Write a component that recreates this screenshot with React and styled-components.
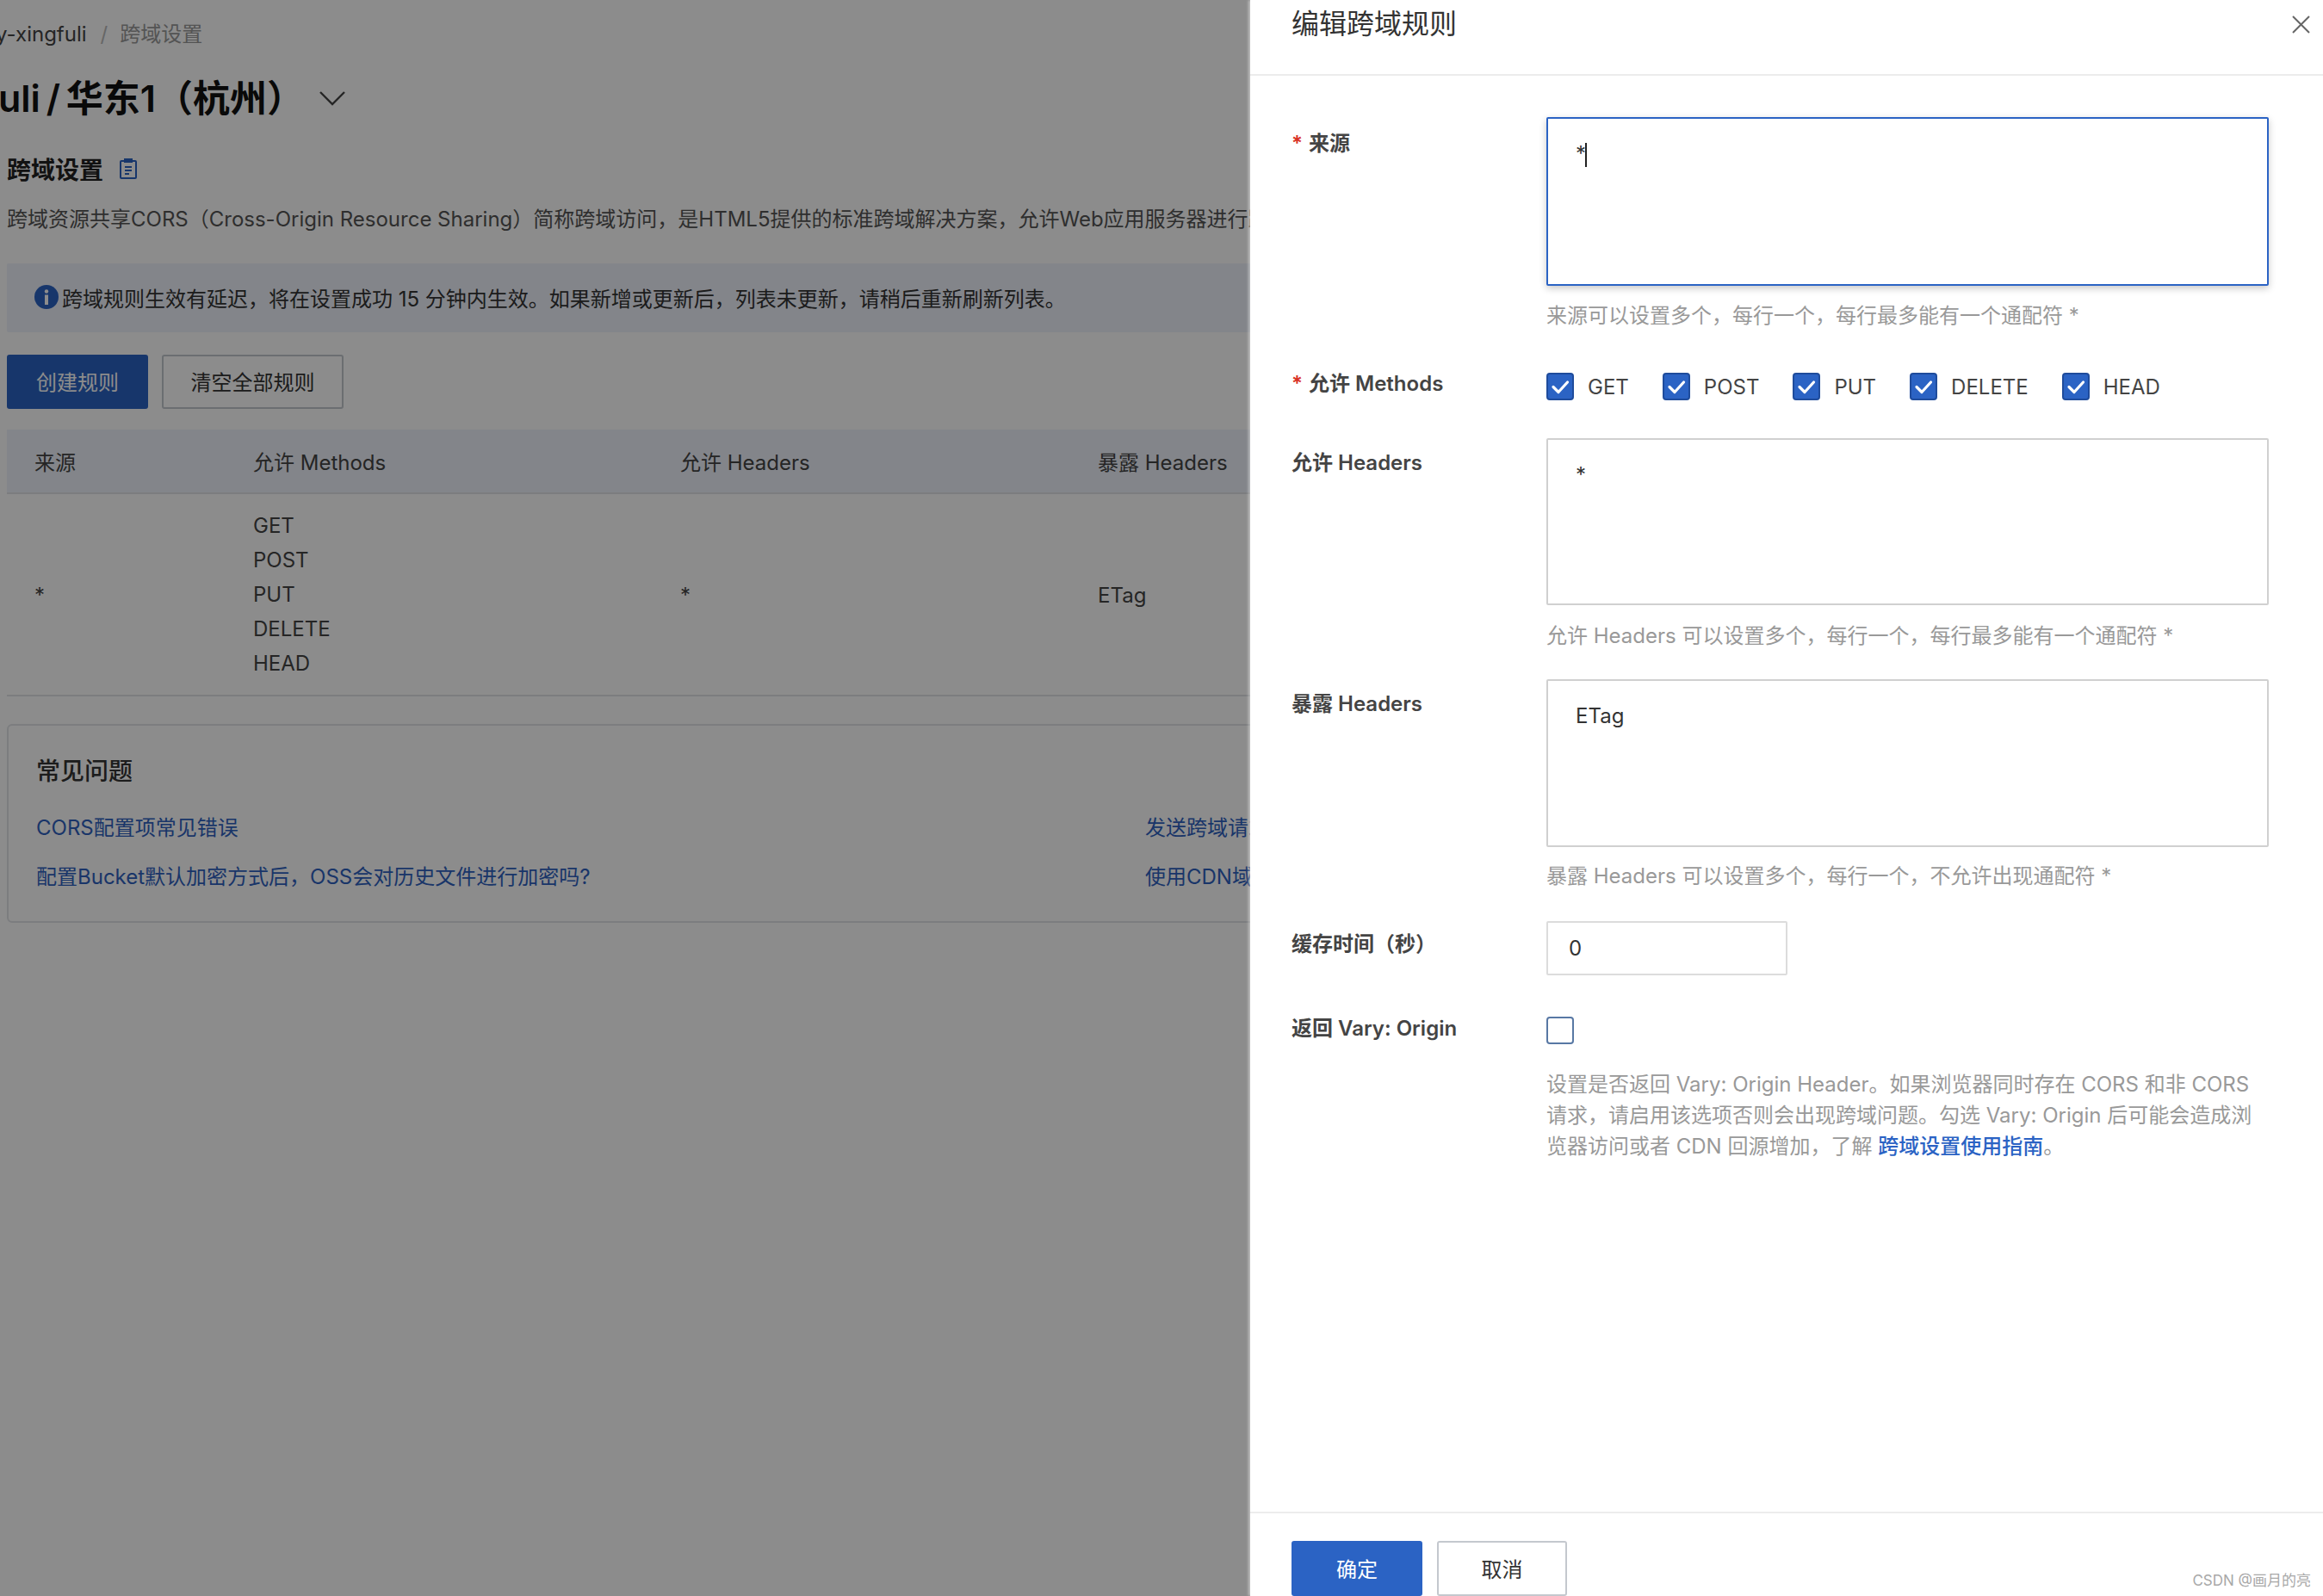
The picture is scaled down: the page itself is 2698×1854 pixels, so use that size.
import React from "react";
import styled, { createGlobalStyle } from "styled-components";

const FONT = `Inter, "Noto Sans CJK SC", "Liberation Sans", sans-serif`;

const Global = createGlobalStyle`
  html, body { margin: 0; padding: 0; background: #fff; overflow: hidden; }
  #root { height: 1854px; }
  * { box-sizing: border-box; }
  body { font-family: ${FONT}; font-size: 24px; color: #333; }
`;

const Screen = styled.div`
  position: relative;
  width: 2698px;
  height: 1854px;
  overflow: hidden;
`;

const Page = styled.main`
  padding: 20px 0 0 8px;
  width: 1480px;
  overflow: hidden;
`;

const Breadcrumb = styled.nav`
  display: flex;
  align-items: center;
  height: 40px;
  margin-left: -8px;
  line-height: 40px;
  white-space: nowrap;
  color: #444;
`;

const Crumb = styled.span`
  margin-left: ${(p) => p.$clip || 0}px;
  color: ${(p) => p.$muted ? "#999" : "#444"};
`;

const CrumbSlash = styled.span`
  margin: 0 14px 0 16px;
  color: #bbb;
`;

const PageTitleRow = styled.div`
  display: flex;
  align-items: center;
  height: 60px;
  margin: 24px 0 0 -8px;
`;

const PageTitle = styled.h1`
  margin: 0 0 0 -2px;
  font-size: 43px;
  font-weight: 600;
  line-height: 60px;
  word-spacing: -4px;
  color: #111;
  white-space: nowrap;
`;

const Chevron = styled.svg`
  margin-left: 17px;
  width: 32px;
  height: 18px;
  flex: none;
`;

const SectionHead = styled.div`
  display: flex;
  align-items: center;
  height: 40px;
  margin-top: 32px;
  gap: 19px;
`;

const SectionTitle = styled.h2`
  margin: 0;
  font-size: 28px;
  font-weight: 600;
  color: #222;
`;

const Intro = styled.p`
  margin: 21px 0 0;
  line-height: 36px;
  color: #555;
  white-space: nowrap;
`;

const Notice = styled.div`
  display: flex;
  align-items: center;
  gap: 4px;
  height: 80px;
  margin-top: 33px;
  padding: 0 0 2px 32px;
  background: #eef2fb;
  color: #333;
  white-space: nowrap;
  border-radius: 2px;
`;

const Actions = styled.div`
  display: flex;
  gap: 16px;
  margin-top: 26px;
`;

const Button = styled.button`
  width: ${(p) => p.$w}px;
  height: ${(p) => p.$h || 63}px;
  font: inherit;
  font-size: 24px;
  border-radius: 3px;
  padding: 0 0 2px;
  cursor: pointer;
  border: 2px solid ${(p) => (p.$primary ? "#2b63c4" : "#c4c8ce")};
  background: ${(p) => (p.$primary ? "#2b63c4" : "#fff")};
  color: ${(p) => (p.$primary ? "#fff" : "#333")};
`;

const Table = styled.div`
  margin-top: 24px;
  width: 2000px;
`;

const TableHead = styled.div`
  display: grid;
  grid-template-columns: 254px 496px 485px 1fr;
  align-items: center;
  height: 75px;
  padding-left: 32px;
  background: #eef2fb;
  border-bottom: 2px solid #e2e4e8;
  color: #444;
`;

const TableRow = styled.div`
  display: grid;
  grid-template-columns: 254px 496px 485px 1fr;
  align-items: center;
  padding: 17px 0 16px 32px;
  border-bottom: 2px solid #e2e4e8;
  color: #444;
`;

const MethodLine = styled.div`
  line-height: 40px;
`;

const FaqCard = styled.section`
  width: 2000px;
  height: 231px;
  margin-top: 32px;
  padding: 32px 0 0 32px;
  border: 2px solid #e2e4e8;
  border-radius: 6px;
`;

const FaqTitle = styled.h3`
  margin: 0;
  font-size: 28px;
  font-weight: 500;
  line-height: 42px;
  color: #333;
`;

const FaqGrid = styled.div`
  display: grid;
  grid-template-columns: 1288px 1fr;
  grid-auto-rows: 57px;
  align-items: center;
  margin-top: 14px;
`;

const FaqLink = styled.a`
  color: #2f62c0;
  white-space: nowrap;
`;

const Scrim = styled.div`
  position: absolute;
  inset: 0;
  background: rgba(0, 0, 0, 0.45);
`;

const Drawer = styled.aside`
  position: absolute;
  top: 0;
  right: 0;
  bottom: 0;
  width: 1246px;
  display: flex;
  flex-direction: column;
  background: #fff;
  box-shadow: -2px 0 3px rgba(255, 255, 255, 0.45);
`;

const DrawerHead = styled.header`
  display: flex;
  justify-content: space-between;
  height: 88px;
  padding: 0 15px 0 48px;
  border-bottom: 2px solid #ececec;
`;

const DrawerTitle = styled.h2`
  margin: 0;
  font-size: 32px;
  font-weight: 400;
  line-height: 56px;
  color: #333;
`;

const CloseIcon = styled.svg`
  margin-top: 18px;
  width: 21px;
  height: 21px;
`;

const DrawerBody = styled.div`
  flex: 1;
  padding: 48px 64px 0 48px;
`;

const FormRow = styled.div`
  display: grid;
  grid-template-columns: 296px 839px;
  margin-top: ${(p) => p.$mt || 0}px;
`;

const FieldLabel = styled.label`
  display: block;
  margin-top: ${(p) => p.$top || 0}px;
  line-height: 36px;
  font-weight: 600;
  color: #444;
`;

const Required = styled.span`
  color: #d93026;
  margin-right: 7px;
`;

const TextBox = styled.div`
  height: ${(p) => p.$h}px;
  padding: 23px 32px;
  line-height: 36px;
  border-radius: 2px;
  color: #333;
  border: 2px solid ${(p) => (p.$focus ? "#2b63c4" : "#d0d0d0")};
  box-shadow: ${(p) => (p.$focus ? "0 3px 8px rgba(0,0,0,.22)" : "none")};
`;

const Caret = styled.span`
  display: inline-block;
  width: 2px;
  height: 28px;
  margin-left: -1px;
  vertical-align: -7px;
  background: #222;
`;

const Hint = styled.div`
  margin-top: ${(p) => p.$mt}px;
  line-height: 36px;
  color: #999;
`;

const Methods = styled.div`
  display: flex;
  gap: 39px;
`;

const Method = styled.label`
  display: flex;
  align-items: center;
  gap: 16px;
  height: 32px;
  color: #444;
`;

const Check = styled.span`
  display: flex;
  align-items: center;
  justify-content: center;
  width: 32px;
  height: 32px;
  flex: none;
  border-radius: 4px;
  background: ${(p) => (p.$on ? "#2b63c4" : "#fff")};
  border: 2px solid ${(p) => (p.$on ? "#1f4c9c" : "#5878a4")};
`;

const NumberBox = styled.div`
  width: 280px;
  height: 63px;
  padding-left: 24px;
  line-height: 60px;
  border: 2px solid #dcdcdc;
  border-radius: 2px;
  color: #333;
`;

const HelpLine = styled.div`
  line-height: 36px;
  white-space: nowrap;
`;

const HelpLink = styled.a`
  color: #2b63c4;
  font-weight: 500;
`;

const DrawerFoot = styled.footer`
  display: flex;
  gap: 17px;
  height: 98px;
  padding: 32px 0 0 48px;
  border-top: 2px solid #ececec;
`;

const Watermark = styled.div`
  position: absolute;
  right: 14px;
  bottom: 6px;
  font-size: 17px;
  line-height: 24px;
  color: #a8a8a8;
`;

const METHODS = ["GET", "POST", "PUT", "DELETE", "HEAD"];

const Tick = () => (
  <svg width="28" height="28" viewBox="0 0 28 28" fill="none" stroke="#fff" strokeWidth="3.2" strokeLinecap="round" strokeLinejoin="round">
    <path d="M6 14.5l6 6L22.500 9" />
  </svg>
);

const DocIcon = () => (
  <svg width="20" height="24" viewBox="0 0 20 24" fill="none" stroke="#2b63c4" strokeWidth="2">
    <rect x="1" y="3" width="18" height="20" rx="1" />
    <path d="M6 1h8v3H6zM6 10h8M6 14h8M6 18h5" />
  </svg>
);

const InfoIcon = () => (
  <svg width="28" height="28" viewBox="0 0 28 28">
    <circle cx="14" cy="14" r="14" fill="#2b63c4" />
    <circle cx="14" cy="7.5" r="2.2" fill="#fff" />
    <rect x="12" y="11.5" width="4" height="11.5" fill="#fff" />
  </svg>
);

export default function App() {
  return (
    <Screen>
      <Global />
      <Page>
        <Breadcrumb>
          <Crumb $clip={-5}>y-xingfuli</Crumb>
          <CrumbSlash>/</CrumbSlash>
          <Crumb $muted>跨域设置</Crumb>
        </Breadcrumb>
        <PageTitleRow>
          <PageTitle>uli / 华东1（杭州）</PageTitle>
          <Chevron viewBox="0 0 32 18" fill="none" stroke="#444" strokeWidth="2.4">
            <path d="M2 2l14 14L30 2" />
          </Chevron>
        </PageTitleRow>
        <SectionHead>
          <SectionTitle>跨域设置</SectionTitle>
          <DocIcon />
        </SectionHead>
        <Intro>跨域资源共享CORS（Cross-Origin Resource Sharing）简称跨域访问，是HTML5提供的标准跨域解决方案，允许Web应用服务器进行跨域访问控制</Intro>
        <Notice>
          <InfoIcon />
          跨域规则生效有延迟，将在设置成功 15 分钟内生效。如果新增或更新后，列表未更新，请稍后重新刷新列表。
        </Notice>
        <Actions>
          <Button $primary $w={164}>创建规则</Button>
          <Button $w={211}>清空全部规则</Button>
        </Actions>
        <Table>
          <TableHead>
            <span>来源</span>
            <span>允许 Methods</span>
            <span>允许 Headers</span>
            <span>暴露 Headers</span>
          </TableHead>
          <TableRow>
            <span>*</span>
            <div>
              {METHODS.map((m) => (
                <MethodLine key={m}>{m}</MethodLine>
              ))}
            </div>
            <span>*</span>
            <span>ETag</span>
          </TableRow>
        </Table>
        <FaqCard>
          <FaqTitle>常见问题</FaqTitle>
          <FaqGrid>
            <FaqLink>CORS配置项常见错误</FaqLink>
            <FaqLink>发送跨域请求</FaqLink>
            <FaqLink>配置Bucket默认加密方式后，OSS会对历史文件进行加密吗?</FaqLink>
            <FaqLink>使用CDN域名</FaqLink>
          </FaqGrid>
        </FaqCard>
      </Page>
      <Scrim />
      <Drawer>
        <DrawerHead>
          <DrawerTitle>编辑跨域规则</DrawerTitle>
          <CloseIcon viewBox="0 0 21 21" fill="none" stroke="#666" strokeWidth="2">
            <path d="M1 1l19 19M20 1L1 20" />
          </CloseIcon>
        </DrawerHead>
        <DrawerBody>
          <FormRow>
            <FieldLabel $top={13}><Required>*</Required>来源</FieldLabel>
            <div>
              <TextBox $focus $h={196}>*<Caret /></TextBox>
              <Hint $mt={17}>来源可以设置多个，每行一个，每行最多能有一个通配符 *</Hint>
            </div>
          </FormRow>
          <FormRow $mt={48}>
            <FieldLabel $top={-5}><Required>*</Required>允许 Methods</FieldLabel>
            <Methods>
              {METHODS.map((m) => (
                <Method key={m}>
                  <Check $on><Tick /></Check>
                  {m}
                </Method>
              ))}
            </Methods>
          </FormRow>
          <FormRow $mt={44}>
            <FieldLabel $top={11}>允许 Headers</FieldLabel>
            <div>
              <TextBox $h={194}>*</TextBox>
              <Hint $mt={18}>允许 Headers 可以设置多个，每行一个，每行最多能有一个通配符 *</Hint>
            </div>
          </FormRow>
          <FormRow $mt={32}>
            <FieldLabel $top={11}>暴露 Headers</FieldLabel>
            <div>
              <TextBox $h={195}>ETag</TextBox>
              <Hint $mt={16}>暴露 Headers 可以设置多个，每行一个，不允许出现通配符 *</Hint>
            </div>
          </FormRow>
          <FormRow $mt={34}>
            <FieldLabel $top={9}>缓存时间（秒）</FieldLabel>
            <NumberBox>0</NumberBox>
          </FormRow>
          <FormRow $mt={48}>
            <FieldLabel $top={-4}>返回 Vary: Origin</FieldLabel>
            <div>
              <Check />
              <Hint $mt={29}>
                <HelpLine>设置是否返回 Vary: Origin Header。如果浏览器同时存在 CORS 和非 CORS</HelpLine>
                <HelpLine>请求，请启用该选项否则会出现跨域问题。勾选 Vary: Origin 后可能会造成浏</HelpLine>
                <HelpLine>览器访问或者 CDN 回源增加，了解 <HelpLink>跨域设置使用指南</HelpLink>。</HelpLine>
              </Hint>
            </div>
          </FormRow>
        </DrawerBody>
        <DrawerFoot>
          <Button $primary $w={152} $h={64}>确定</Button>
          <Button $w={151} $h={64}>取消</Button>
        </DrawerFoot>
      </Drawer>
      <Watermark>CSDN @画月的亮</Watermark>
    </Screen>
  );
}
